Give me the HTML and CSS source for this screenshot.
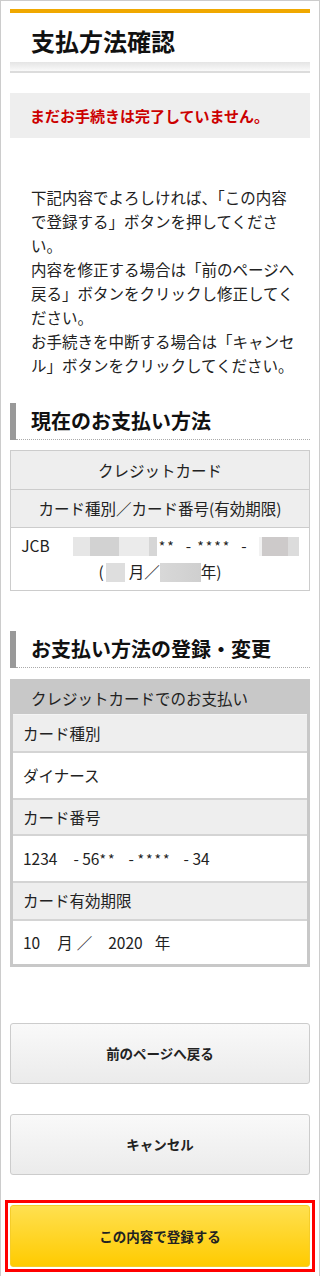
FILE: index.html
```html
<!DOCTYPE html>
<html lang="ja">

<head>
    <meta charset="UTF-8">
    <meta name="viewport" content="width=device-width, initial-scale=1.0">
    <title>支払方法確認</title>
    <link rel="stylesheet" href="styles.css">
</head>

<body>
    <div class="page">
        <!-- タイトル -->
        <div class="title-box">
            <h1 class="title">支払方法確認</h1>
            <div class="title-shade"></div>
        </div>

        <div class="notice">まだお手続きは完了していません。</div>

        <p class="lead">下記内容でよろしければ、「この内容で登録する」ボタンを押してください。<br>内容を修正する場合は「前のページへ戻る」ボタンをクリックし修正してください。<br>お手続きを中断する場合は「キャンセル」ボタンをクリックしてください。</p>

        <!-- 現在のお支払い方法 -->
        <div class="sec-head">
            <h2>現在のお支払い方法</h2>
        </div>
        <div class="cur-table">
            <div class="cur-row cur-head">クレジットカード</div>
            <div class="cur-row cur-sub">カード種別／カード番号(有効期限)</div>
            <div class="cur-row cur-data">
                <div class="cur-line">JCB<span class="blur blur-a"></span><span class="stars">**</span><span class="dash">-</span><span class="stars">****</span><span class="dash">-</span><span class="blur blur-b"></span></div>
                <div class="cur-line">(<span class="blur blur-c"></span>月／<span class="blur blur-d"></span>年)</div>
            </div>
        </div>

        <!-- お支払い方法の登録・変更 -->
        <div class="sec-head sec-head-2">
            <h2>お支払い方法の登録・変更</h2>
        </div>
        <div class="reg-table">
            <div class="reg-head">クレジットカードでのお支払い</div>
            <div class="reg-row reg-label reg-first">カード種別</div>
            <div class="reg-row reg-value">ダイナース</div>
            <div class="reg-row reg-label">カード番号</div>
            <div class="reg-row reg-value">1234<span class="gap-a">- 56<span class="stars">**</span></span><span class="gap-b">- <span class="stars">****</span></span><span class="gap-b">- 34</span></div>
            <div class="reg-row reg-label reg-label-3">カード有効期限</div>
            <div class="reg-row reg-value reg-last">10<span class="gap-m">月</span><span class="gap-s">／</span><span class="gap-y">2020</span><span class="gap-n">年</span></div>
        </div>

        <!-- ボタン -->
        <div class="btn">前のページへ戻る</div>
        <div class="btn btn-cancel">キャンセル</div>
        <div class="submit-frame">
            <div class="btn btn-submit">この内容で登録する</div>
        </div>
    </div>
</body>

</html>
```

FILE: styles.css
```css
/* 全体 */
body {
    margin: 0;
    padding: 0;
    font-family: "Noto Sans CJK JP", sans-serif;
    color: #333;
    background: #fff;
}

.page {
    box-sizing: border-box;
    min-height: 1276px;
    border: 1px solid #ccc;
    border-bottom: none;
    padding: 8px 9px 0;
}

/* タイトル */
.title-box {
    border-top: 4px solid #f0a800;
}

.title {
    margin: 0;
    padding: 13px 0 6px 21px;
    font-size: 24px;
    line-height: 30px;
    font-weight: bold;
    color: #111;
}

.title-shade {
    height: 9px;
    background: linear-gradient(#e4e4e4, #fafafa);
    border-bottom: 2px solid #dcdcdc;
}

/* 注意メッセージ */
.notice {
    margin-top: 20px;
    padding: 11px 20px;
    background: #eee;
    color: #cc0000;
    font-size: 15px;
    font-weight: bold;
    line-height: 23px;
}

.lead {
    margin: 47px 0 0;
    padding: 0 12px 0 21px;
    font-size: 15.5px;
    line-height: 24px;
    color: #222;
}

/* 見出し */
.sec-head {
    margin-top: 26px;
    border-left: 6px solid #999;
}

.sec-head h2 {
    margin: 0;
    padding-left: 15px;
    font-size: 20px;
    line-height: 36px;
    font-weight: bold;
    color: #111;
    border-bottom: 1px dotted #aaa;
}

.sec-head-2 {
    margin-top: 40px;
}

/* 現在の支払い方法テーブル */
.cur-table {
    margin-top: 10px;
    border: 1px solid #ccc;
    font-size: 15.5px;
    color: #222;
    text-align: center;
}

.cur-row {
    border-bottom: 1px solid #ccc;
}

.cur-head {
    height: 38px;
    line-height: 38px;
    background: #eee;
}

.cur-sub {
    height: 37px;
    line-height: 37px;
    background: #eee;
}

.cur-data {
    border-bottom: none;
    padding: 5px 4px 6px;
    line-height: 25px;
    white-space: nowrap;
}

.blur {
    display: inline-block;
    height: 19px;
    vertical-align: -4px;
}

.blur-a {
    width: 84px;
    margin: 0 2px 0 23px;
    background: linear-gradient(to right, #e6e6e6 0 20%, #d2d2d2 20% 55%, #ebebeb 55% 90%, #d6d6d6 90%);
}

.blur-b {
    width: 40px;
    margin-left: 6px;
    background: linear-gradient(to right, #f2f2f2 0 8%, #cdcaca 8% 72%, #dcdcdc 72%);
}

.blur-c {
    width: 19px;
    margin: 0 4px 0 2px;
    background: #dedede;
}

.blur-d {
    width: 41px;
    background: linear-gradient(to right, #d8d8d8, #cfcfcf);
}

.stars {
    font-size: 14px;
    letter-spacing: 2px;
}

.dash {
    margin: 0 6px 0 10px;
}

/* 登録・変更テーブル */
.reg-table {
    margin-top: 11px;
    border: 3px solid #c8c8c8;
    font-size: 15.5px;
    color: #222;
}

.reg-head {
    height: 32px;
    line-height: 32px;
    padding-left: 18px;
    background: #c8c8c8;
}

.reg-row {
    padding-left: 10px;
    border-top: 2px solid #d4d4d4;
}

.reg-label {
    height: 34px;
    line-height: 34px;
    background: #eee;
}

.reg-first {
    border-top: 1px solid #f4f4f4;
    height: 36px;
    line-height: 36px;
}

.reg-label-3 {
    height: 36px;
    line-height: 35px;
}

.reg-value {
    height: 45px;
    line-height: 45px;
    background: #fff;
}

.reg-last {
    height: 43px;
    line-height: 43px;
}

.gap-a {
    margin-left: 16px;
}

.gap-b {
    margin-left: 12px;
}

.gap-m {
    margin-left: 17px;
}

.gap-s {
    margin-left: 4px;
}

.gap-y {
    margin-left: 16px;
}

.gap-n {
    margin-left: 12px;
}

/* ボタン */
.btn {
    box-sizing: border-box;
    height: 61px;
    margin-top: 56px;
    border: 1px solid #ccc;
    border-radius: 3px;
    background: linear-gradient(#f9f9f9, #ebebeb);
    font-size: 13.5px;
    font-weight: bold;
    line-height: 59px;
    text-align: center;
    color: #222;
    cursor: pointer;
}

.btn-cancel {
    margin-top: 30px;
}

.submit-frame {
    margin: 25px -5px 0;
    padding: 2px;
    border: 3px solid #f00;
}

.btn-submit {
    height: 62px;
    line-height: 60px;
    margin-top: 0;
    border-color: #f5cd2a;
    background: linear-gradient(#ffe050, #ffcb00);
}
```
